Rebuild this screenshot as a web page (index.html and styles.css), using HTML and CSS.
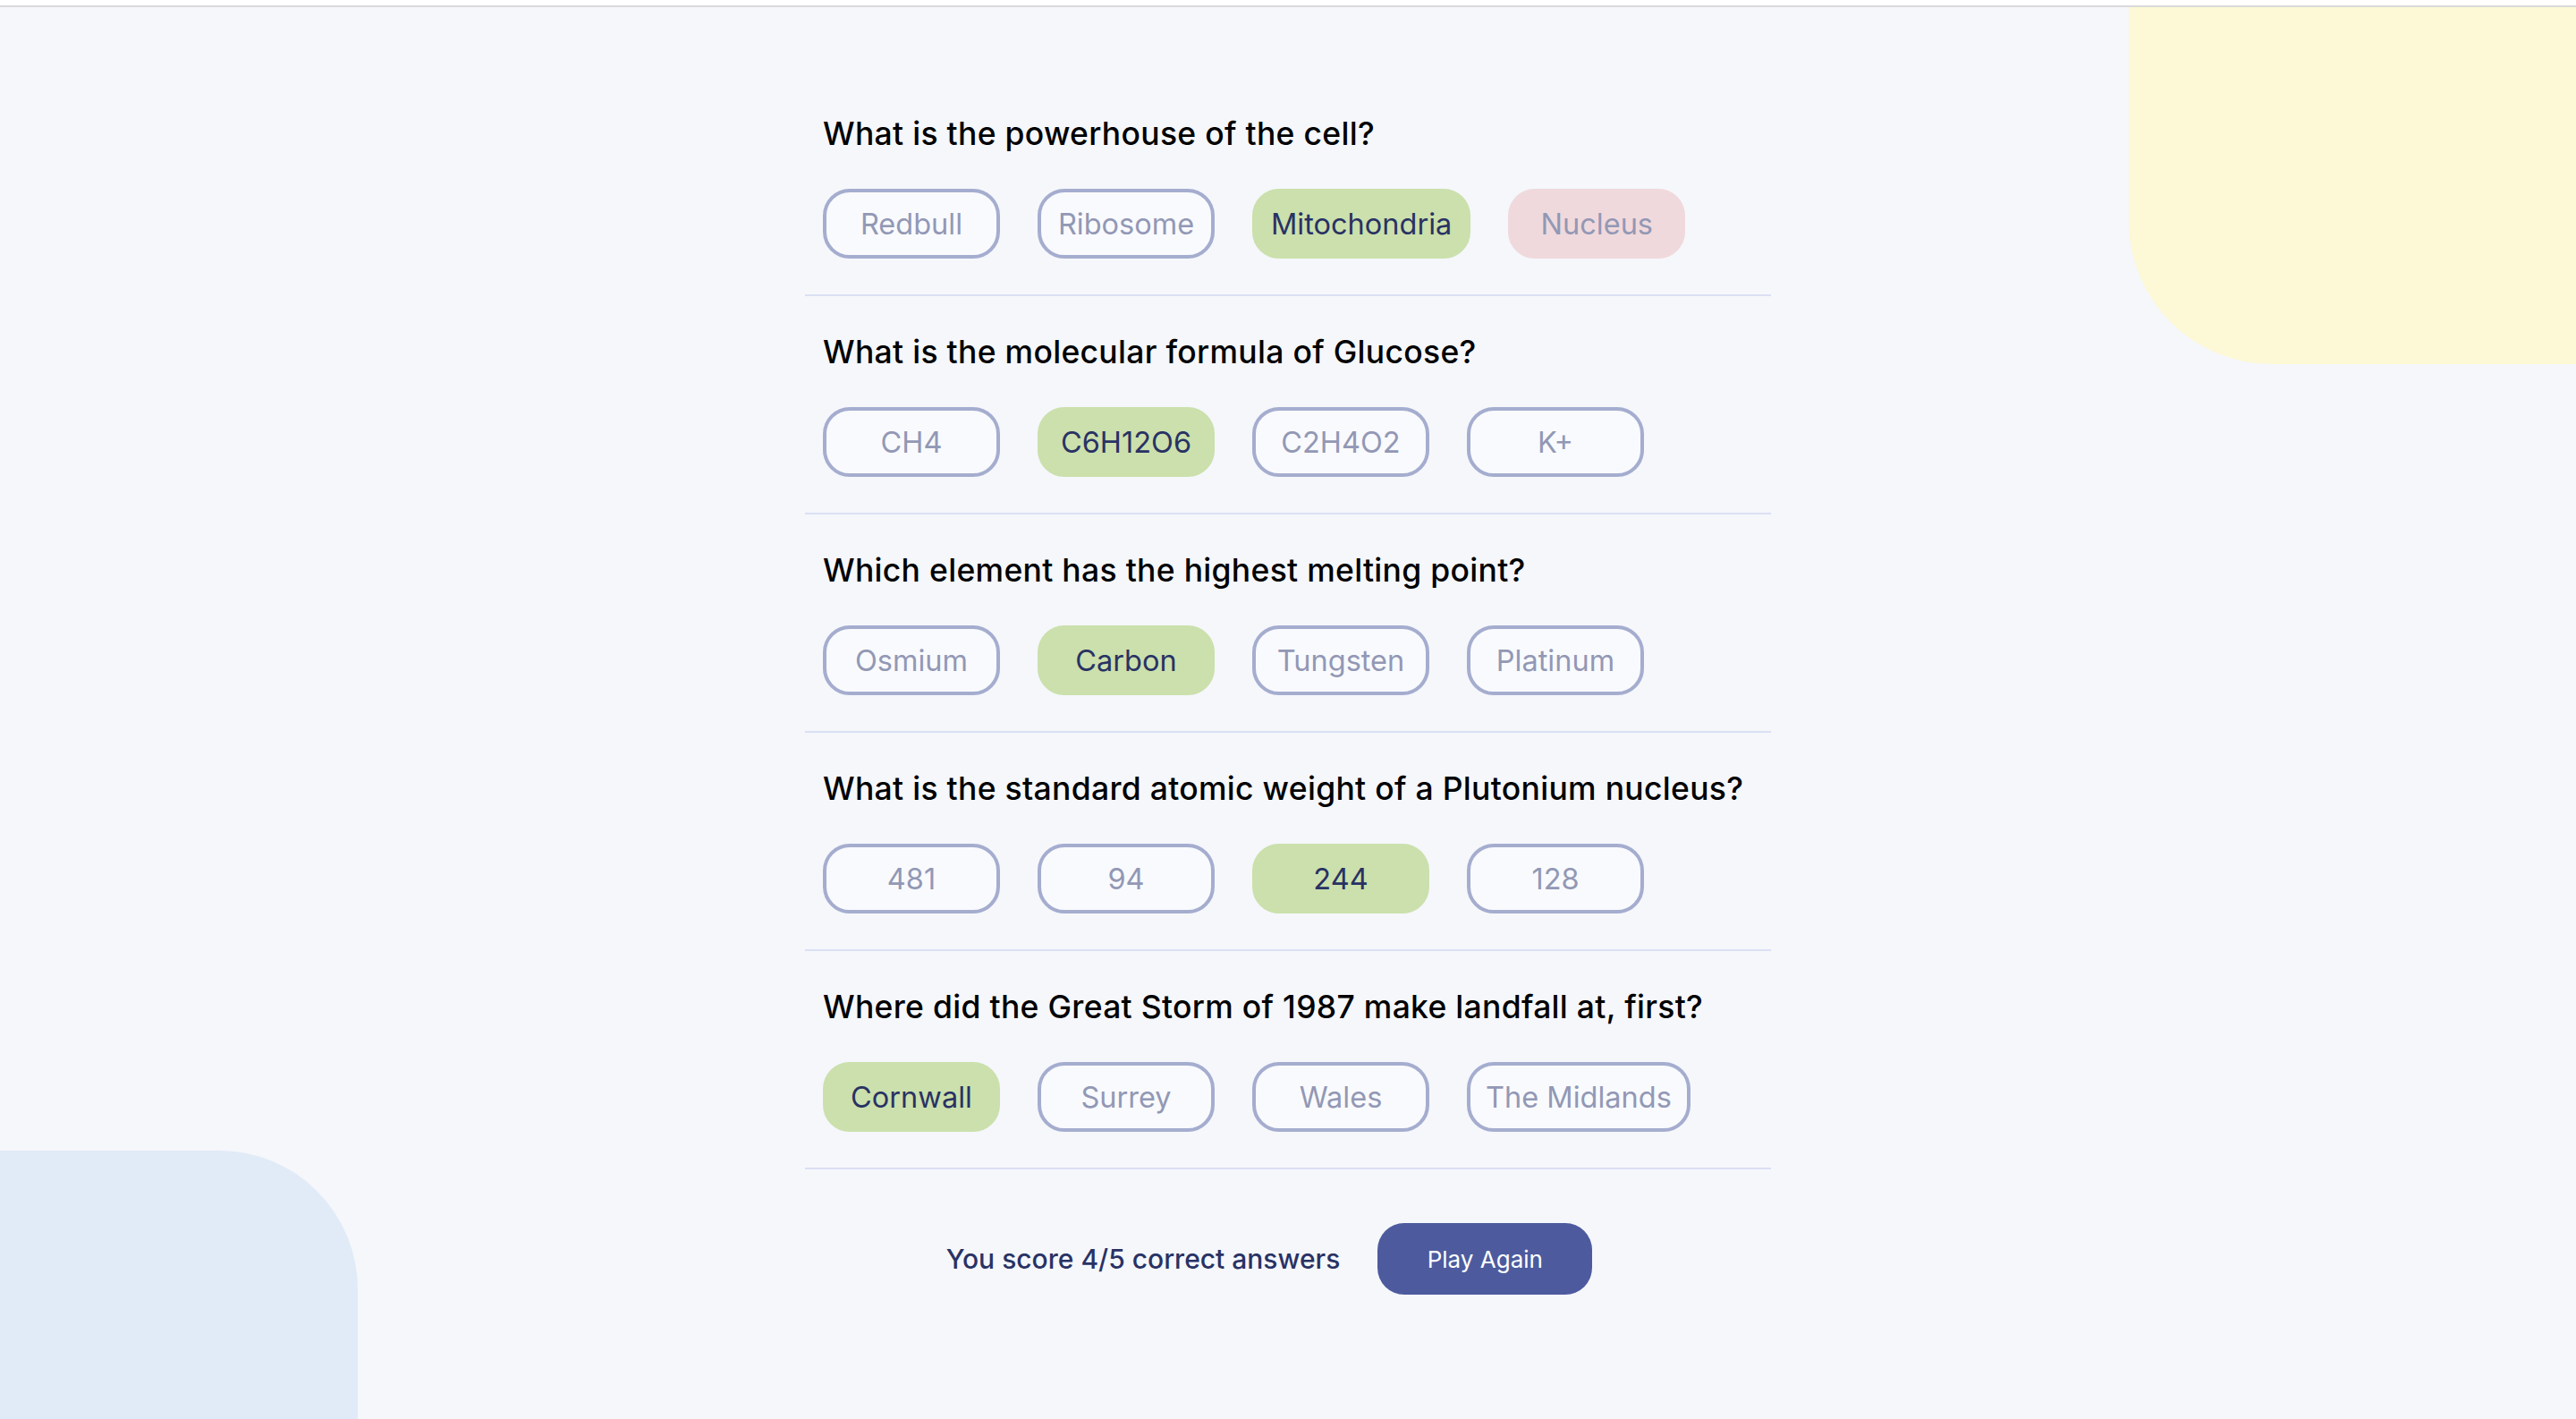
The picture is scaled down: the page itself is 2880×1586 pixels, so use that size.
FILE: index.html
```html
<!DOCTYPE html>
<html lang="en">
<head>
<meta charset="utf-8">
<title>Quiz results</title>
<link rel="stylesheet" href="styles.css">
</head>
<body>
<div class="top-bar"></div>
<div class="page">
  <div class="blob blob-yellow"></div>
  <div class="blob blob-blue"></div>
  <main class="quiz">
    <section class="question">
      <h2 class="question-title">What is the powerhouse of the cell?</h2>
      <div class="answers">
        <span class="answer">Redbull</span>
        <span class="answer">Ribosome</span>
        <span class="answer answer-correct">Mitochondria</span>
        <span class="answer answer-wrong">Nucleus</span>
      </div>
    </section>
    <section class="question">
      <h2 class="question-title">What is the molecular formula of Glucose?</h2>
      <div class="answers">
        <span class="answer">CH4</span>
        <span class="answer answer-correct">C6H12O6</span>
        <span class="answer">C2H4O2</span>
        <span class="answer">K+</span>
      </div>
    </section>
    <section class="question">
      <h2 class="question-title">Which element has the highest melting point?</h2>
      <div class="answers">
        <span class="answer">Osmium</span>
        <span class="answer answer-correct">Carbon</span>
        <span class="answer">Tungsten</span>
        <span class="answer">Platinum</span>
      </div>
    </section>
    <section class="question">
      <h2 class="question-title">What is the standard atomic weight of a Plutonium nucleus?</h2>
      <div class="answers">
        <span class="answer">481</span>
        <span class="answer">94</span>
        <span class="answer answer-correct">244</span>
        <span class="answer">128</span>
      </div>
    </section>
    <section class="question">
      <h2 class="question-title">Where did the Great Storm of 1987 make landfall at, first?</h2>
      <div class="answers">
        <span class="answer answer-correct">Cornwall</span>
        <span class="answer">Surrey</span>
        <span class="answer">Wales</span>
        <span class="answer">The Midlands</span>
      </div>
    </section>
    <div class="score-row">
      <p class="score-text">You score 4/5 correct answers</p>
      <button class="play-btn" type="button">Play Again</button>
    </div>
  </main>
</div>
</body>
</html>
```

FILE: styles.css
```css
html, body {
  margin: 0;
  padding: 0;
}

body {
  background: #f5f7fb;
  font-family: "Inter", "Liberation Sans", sans-serif;
  height: 1586px;
  overflow: hidden;
}

.top-bar {
  height: 6px;
  background: #ffffff;
  border-bottom: 2px solid #dadada;
}

.page {
  position: relative;
  height: 1578px;
}

.blob {
  position: absolute;
  z-index: 0;
}

.blob-yellow {
  top: 0;
  right: 0;
  width: 500px;
  height: 399px;
  background: #fdf8d5;
  border-bottom-left-radius: 160px;
}

.blob-blue {
  left: 0;
  bottom: 0;
  width: 400px;
  height: 300px;
  background: #e1ebf7;
  border-top-right-radius: 155px;
}

.quiz {
  position: relative;
  z-index: 1;
  width: 1080px;
  margin: 0 auto;
  padding-top: 79px;
}

.question {
  padding: 41px 0 40px 20px;
  border-bottom: 2px solid #dbe0f4;
}

.question-title {
  margin: 0 0 39px 0;
  font-size: 35.5px;
  line-height: 44px;
  font-weight: 500;
  color: #000000;
  letter-spacing: 0.3px;
}

.answers {
  display: flex;
  gap: 42px;
}

.answer {
  box-sizing: border-box;
  display: flex;
  align-items: center;
  justify-content: center;
  min-width: 198px;
  height: 78px;
  padding: 0 17px;
  border: 4px solid #a5adcf;
  border-radius: 30px;
  background: #f9fafd;
  color: #9298b5;
  font-size: 32.5px;
  font-weight: 400;
}

.answer-correct {
  background: #cbe0ac;
  border-color: #cbe0ac;
  color: #293264;
}

.answer-wrong {
  background: #f0d9dc;
  border-color: #f0d9dc;
  color: #9298b5;
}

.score-row {
  display: flex;
  justify-content: center;
  align-items: center;
  gap: 42px;
  margin-top: 60px;
  padding-right: 42px;
}

.score-text {
  margin: 0;
  font-size: 30px;
  font-weight: 500;
  color: #293264;
}

.play-btn {
  width: 240px;
  height: 80px;
  border: none;
  border-radius: 30px;
  background: #4d5b9e;
  color: #ffffff;
  font-family: "Inter", "Liberation Sans", sans-serif;
  font-size: 26px;
  font-weight: 400;
}
```
